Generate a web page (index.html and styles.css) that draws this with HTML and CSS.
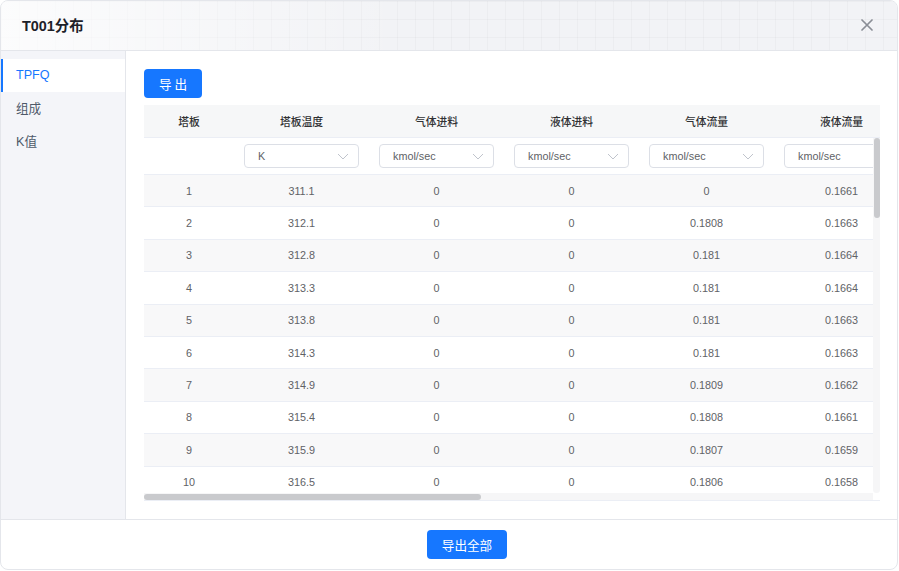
FILE: index.html
```html
<!DOCTYPE html>
<html lang="zh-CN">
<head>
<meta charset="utf-8">
<title>T001分布</title>
<link rel="stylesheet" href="styles.css">
</head>
<body>
<div class="modal">
  <header class="modal-header">
    <h1 class="modal-title">T001分布</h1>
    <button class="modal-close" aria-label="关闭">
      <svg width="12" height="12" viewBox="0 0 12 12"><path d="M1 1 L11 11 M11 1 L1 11" stroke="#8a8e96" stroke-width="1.7" stroke-linecap="round" fill="none"/></svg>
    </button>
  </header>
  <div class="modal-body">
    <nav class="side">
      <a class="side-item active">TPFQ</a>
      <a class="side-item">组成</a>
      <a class="side-item">K值</a>
    </nav>
    <main class="content">
      <button class="btn btn-primary btn-export">导 出</button>
      <div class="grid">
        <div class="grid-head">
          <div class="row head-row">
            <div class="cell first">塔板</div>
            <div class="cell">塔板温度</div>
            <div class="cell">气体进料</div>
            <div class="cell">液体进料</div>
            <div class="cell">气体流量</div>
            <div class="cell">液体流量</div>
            <div class="cell">压力</div>
            <div class="cell">热负荷</div>
            <div class="cell">气相焓</div>
            <div class="cell">液相焓</div>
            <div class="cell">气相密度</div>
            <div class="cell">液相密度</div>
          </div>
        </div>
        <div class="grid-scroll">
          <div class="grid-body">
            <div class="row filter-row">
              <div class="cell first"></div>
              <div class="cell"><div class="select"><span>K</span><svg class="chev" width="12" height="7" viewBox="0 0 12 7"><polyline points="1,1 6,6 11,1" fill="none" stroke="#c0c4cc" stroke-width="1"/></svg></div></div>
              <div class="cell"><div class="select"><span>kmol/sec</span><svg class="chev" width="12" height="7" viewBox="0 0 12 7"><polyline points="1,1 6,6 11,1" fill="none" stroke="#c0c4cc" stroke-width="1"/></svg></div></div>
              <div class="cell"><div class="select"><span>kmol/sec</span><svg class="chev" width="12" height="7" viewBox="0 0 12 7"><polyline points="1,1 6,6 11,1" fill="none" stroke="#c0c4cc" stroke-width="1"/></svg></div></div>
              <div class="cell"><div class="select"><span>kmol/sec</span><svg class="chev" width="12" height="7" viewBox="0 0 12 7"><polyline points="1,1 6,6 11,1" fill="none" stroke="#c0c4cc" stroke-width="1"/></svg></div></div>
              <div class="cell"><div class="select"><span>kmol/sec</span><svg class="chev" width="12" height="7" viewBox="0 0 12 7"><polyline points="1,1 6,6 11,1" fill="none" stroke="#c0c4cc" stroke-width="1"/></svg></div></div>
              <div class="cell"><div class="select"><span>bar</span><svg class="chev" width="12" height="7" viewBox="0 0 12 7"><polyline points="1,1 6,6 11,1" fill="none" stroke="#c0c4cc" stroke-width="1"/></svg></div></div>
              <div class="cell"><div class="select"><span>kW</span><svg class="chev" width="12" height="7" viewBox="0 0 12 7"><polyline points="1,1 6,6 11,1" fill="none" stroke="#c0c4cc" stroke-width="1"/></svg></div></div>
              <div class="cell"><div class="select"><span>kJ/kmol</span><svg class="chev" width="12" height="7" viewBox="0 0 12 7"><polyline points="1,1 6,6 11,1" fill="none" stroke="#c0c4cc" stroke-width="1"/></svg></div></div>
              <div class="cell"><div class="select"><span>kJ/kmol</span><svg class="chev" width="12" height="7" viewBox="0 0 12 7"><polyline points="1,1 6,6 11,1" fill="none" stroke="#c0c4cc" stroke-width="1"/></svg></div></div>
              <div class="cell"><div class="select"><span>kg/m3</span><svg class="chev" width="12" height="7" viewBox="0 0 12 7"><polyline points="1,1 6,6 11,1" fill="none" stroke="#c0c4cc" stroke-width="1"/></svg></div></div>
              <div class="cell"><div class="select"><span>kg/m3</span><svg class="chev" width="12" height="7" viewBox="0 0 12 7"><polyline points="1,1 6,6 11,1" fill="none" stroke="#c0c4cc" stroke-width="1"/></svg></div></div>
            </div>
            <div class="row data-row"><div class="cell first">1</div><div class="cell">311.1</div><div class="cell">0</div><div class="cell">0</div><div class="cell">0</div><div class="cell">0.1661</div><div class="cell">1.013</div><div class="cell">0</div><div class="cell">-238210</div><div class="cell">-271450</div><div class="cell">2.213</div><div class="cell">612.4</div></div>
            <div class="row data-row"><div class="cell first">2</div><div class="cell">312.1</div><div class="cell">0</div><div class="cell">0</div><div class="cell">0.1808</div><div class="cell">0.1663</div><div class="cell">1.02</div><div class="cell">0</div><div class="cell">-238150</div><div class="cell">-271380</div><div class="cell">2.208</div><div class="cell">611.9</div></div>
            <div class="row data-row"><div class="cell first">3</div><div class="cell">312.8</div><div class="cell">0</div><div class="cell">0</div><div class="cell">0.181</div><div class="cell">0.1664</div><div class="cell">1.027</div><div class="cell">0</div><div class="cell">-238090</div><div class="cell">-271310</div><div class="cell">2.204</div><div class="cell">611.5</div></div>
            <div class="row data-row"><div class="cell first">4</div><div class="cell">313.3</div><div class="cell">0</div><div class="cell">0</div><div class="cell">0.181</div><div class="cell">0.1664</div><div class="cell">1.034</div><div class="cell">0</div><div class="cell">-238030</div><div class="cell">-271240</div><div class="cell">2.201</div><div class="cell">611.1</div></div>
            <div class="row data-row"><div class="cell first">5</div><div class="cell">313.8</div><div class="cell">0</div><div class="cell">0</div><div class="cell">0.181</div><div class="cell">0.1663</div><div class="cell">1.041</div><div class="cell">0</div><div class="cell">-237970</div><div class="cell">-271170</div><div class="cell">2.197</div><div class="cell">610.7</div></div>
            <div class="row data-row"><div class="cell first">6</div><div class="cell">314.3</div><div class="cell">0</div><div class="cell">0</div><div class="cell">0.181</div><div class="cell">0.1663</div><div class="cell">1.048</div><div class="cell">0</div><div class="cell">-237910</div><div class="cell">-271100</div><div class="cell">2.194</div><div class="cell">610.3</div></div>
            <div class="row data-row"><div class="cell first">7</div><div class="cell">314.9</div><div class="cell">0</div><div class="cell">0</div><div class="cell">0.1809</div><div class="cell">0.1662</div><div class="cell">1.055</div><div class="cell">0</div><div class="cell">-237850</div><div class="cell">-271030</div><div class="cell">2.19</div><div class="cell">609.9</div></div>
            <div class="row data-row"><div class="cell first">8</div><div class="cell">315.4</div><div class="cell">0</div><div class="cell">0</div><div class="cell">0.1808</div><div class="cell">0.1661</div><div class="cell">1.062</div><div class="cell">0</div><div class="cell">-237790</div><div class="cell">-270960</div><div class="cell">2.187</div><div class="cell">609.5</div></div>
            <div class="row data-row"><div class="cell first">9</div><div class="cell">315.9</div><div class="cell">0</div><div class="cell">0</div><div class="cell">0.1807</div><div class="cell">0.1659</div><div class="cell">1.069</div><div class="cell">0</div><div class="cell">-237730</div><div class="cell">-270890</div><div class="cell">2.183</div><div class="cell">609.1</div></div>
            <div class="row data-row"><div class="cell first">10</div><div class="cell">316.5</div><div class="cell">0</div><div class="cell">0</div><div class="cell">0.1806</div><div class="cell">0.1658</div><div class="cell">1.076</div><div class="cell">0</div><div class="cell">-237670</div><div class="cell">-270820</div><div class="cell">2.18</div><div class="cell">608.7</div></div>
            <div class="row data-row"><div class="cell first">11</div><div class="cell">317.0</div><div class="cell">0</div><div class="cell">0</div><div class="cell">0.1805</div><div class="cell">0.1657</div><div class="cell">1.083</div><div class="cell">0</div><div class="cell">-237610</div><div class="cell">-270750</div><div class="cell">2.176</div><div class="cell">608.3</div></div>
          </div>
          <div class="vbar"><div class="vthumb"></div></div>
          <div class="hbar"><div class="hthumb"></div></div>
          <div class="corner"></div>
        </div>
      </div>
    </main>
  </div>
  <footer class="modal-footer">
    <button class="btn btn-primary btn-all">导出全部</button>
  </footer>
</div>
</body>
</html>
```
FILE: styles.css
```css
* { box-sizing: border-box; }
html, body { margin: 0; padding: 0; background: #ffffff; }
body {
  font-family: "Liberation Sans", Arial, "Noto Sans CJK SC", sans-serif;
  color: #303133;
}
.modal {
  width: 898px;
  height: 570px;
  border: 1px solid #e4e6eb;
  border-radius: 8px;
  overflow: hidden;
  display: flex;
  flex-direction: column;
  background: #fff;
}
.modal-header {
  flex: 0 0 50px;
  display: flex;
  align-items: center;
  justify-content: space-between;
  padding: 0 24px 2px 21px;
  border-bottom: 1px solid #e4e6eb;
  background-color: #f2f3f6;
  background-image:
    linear-gradient(90deg, rgba(255,255,255,0.75), rgba(255,255,255,0) 45%),
    linear-gradient(rgba(0,0,0,0.025) 1px, transparent 1px),
    linear-gradient(90deg, rgba(0,0,0,0.025) 1px, transparent 1px);
  background-size: 100% 100%, 18px 18px, 18px 18px;
}
.modal-title {
  margin: 0;
  font-size: 14.4px;
  font-weight: bold;
  color: #1d2129;
}
.modal-close {
  border: 0;
  background: transparent;
  padding: 0;
  width: 12px;
  height: 12px;
  display: flex;
  cursor: pointer;
}
.modal-body {
  flex: 1;
  display: flex;
  min-height: 0;
}
.side {
  flex: 0 0 125px;
  background: #f4f5f9;
  border-right: 1px solid #e4e6eb;
  padding-top: 8px;
  display: flex;
  flex-direction: column;
}
.side-item {
  height: 32.5px;
  display: flex;
  align-items: center;
  padding-left: 13px;
  font-size: 12.6px;
  color: #4e5969;
  border-left: 2px solid transparent;
}
.side-item.active {
  background: #fff;
  color: #1677ff;
  border-left-color: #1677ff;
}
.content {
  flex: 1;
  min-width: 0;
  padding: 18px 17px 18px 18px;
  display: flex;
  flex-direction: column;
  align-items: flex-start;
}
.btn {
  border: 0;
  border-radius: 4px;
  font-family: "Noto Sans CJK SC", sans-serif;
  cursor: pointer;
  padding: 0;
}
.btn-primary {
  background: #1677ff;
  color: #fff;
}
.btn-export {
  width: 58px;
  height: 29px;
  font-size: 12.6px;
}
.btn-all {
  width: 80px;
  height: 29px;
  font-size: 12.6px;
}
.grid {
  margin-top: 7px;
  width: 736px;
  border-bottom: 1px solid #ebeef5;
  font-size: 10.8px;
}
.grid-head {
  overflow: hidden;
  background: #f6f7f8;
}
.grid-scroll {
  display: grid;
  grid-template-columns: 729px 7px;
  grid-template-rows: 355px 7px;
}
.grid-body {
  overflow: hidden;
}
.vbar {
  background: #f6f6f7;
  border-radius: 0 0 4px 4px;
  padding: 0 0.5px;
}
.vthumb {
  height: 80px;
  background: #c9cacd;
  border-radius: 4px;
}
.hbar {
  background: #f6f6f7;
  padding-top: 1px;
}
.hthumb {
  width: 337px;
  height: 6px;
  background: #c9cacd;
  border-radius: 4px;
}
.corner { background: #fff; }
.row {
  display: flex;
  width: 1575px;
  border-bottom: 1px solid #ebeef5;
}
.cell {
  flex: 0 0 135px;
  display: flex;
  align-items: center;
  justify-content: center;
  color: #606266;
}
.cell.first {
  flex-basis: 90px;
  position: sticky;
  left: 0;
  z-index: 1;
  background: inherit;
}
.head-row {
  height: 33px;
  background: #f6f7f8;
}
.head-row .cell {
  font-family: "Noto Sans CJK SC", sans-serif;
  font-weight: 500;
  color: #303133;
}
.filter-row {
  height: 37px;
  background: #fff;
}
.data-row {
  height: 32.4px;
  background: #fff;
}
.data-row:nth-child(even) { background: #f8f8f9; }
.select {
  width: 115px;
  height: 24px;
  border: 1px solid #dcdfe6;
  border-radius: 4px;
  background: #fff;
  display: flex;
  align-items: center;
  justify-content: space-between;
  padding: 0 9px 0 13px;
  color: #606266;
}
.chev { display: block; }
.modal-footer {
  flex: 0 0 50px;
  border-top: 1px solid #e4e6eb;
  display: flex;
  align-items: center;
  justify-content: center;
  padding-left: 36px;
}
```
